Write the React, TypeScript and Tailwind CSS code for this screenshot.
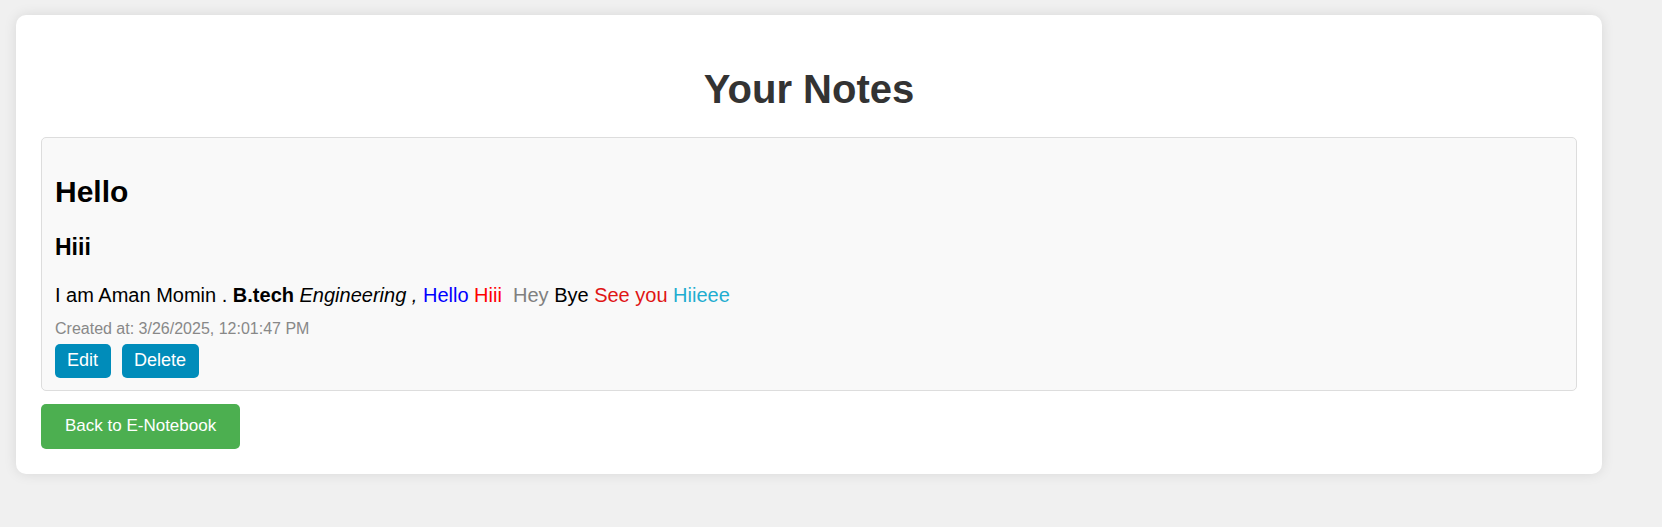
export default function App() {
  return (
    <div className="min-h-screen bg-[#f0f0f0] py-[15px] pl-4 pr-[60px] font-['Liberation_Sans',Arial,sans-serif] text-black">
      <main className="rounded-[10px] bg-white px-[25px] pb-[25px] pt-[50px] shadow-[0_0_13px_rgba(0,0,0,0.1)]">
        <h1 className="text-center text-[40px] font-bold leading-[48px] text-[#333]">Your Notes</h1>
        <article className="mt-6 rounded-[5px] border border-[#ddd] bg-[#f9f9f9] px-[13px] pb-3 pt-[36px]">
          <h2 className="text-[30px] font-bold leading-[36px]">Hello</h2>
          <h3 className="mt-6 text-[23px] font-bold leading-[26px]">Hiii</h3>
          <p className="mt-[23px] text-[20px] leading-[24px]">
            I am Aman Momin . <b>B.tech</b> <i>Engineering , </i>
            <span className="text-[#0000ff]">Hello </span>
            <span className="text-[#ff0000]">Hiii </span>&nbsp;
            <span className="text-[#808080]">Hey </span>Bye{' '}
            <span className="text-[#e01515]">See you </span>
            <span className="text-[#1fadd0]">Hiieee</span>
          </p>
          <p className="mt-[13px] text-[16px] leading-[18px] text-[#888]">Created at: 3/26/2025, 12:01:47 PM</p>
          <div className="mt-1.5 flex gap-[11px]">
            <button type="button" className="rounded-[5px] bg-[#008cba] pb-2 pl-3 pr-[13px] pt-1.5 text-[18px] leading-[20px] text-white">Edit</button>
            <button type="button" className="rounded-[5px] bg-[#008cba] pb-2 pl-3 pr-[13px] pt-1.5 text-[18px] leading-[20px] text-white">Delete</button>
          </div>
        </article>
        <button type="button" className="mt-[13px] rounded-[5px] bg-[#4caf50] px-6 pb-[13px] pt-3 text-[17px] leading-[20px] text-white">Back to E-Notebook</button>
      </main>
    </div>
  );
}
